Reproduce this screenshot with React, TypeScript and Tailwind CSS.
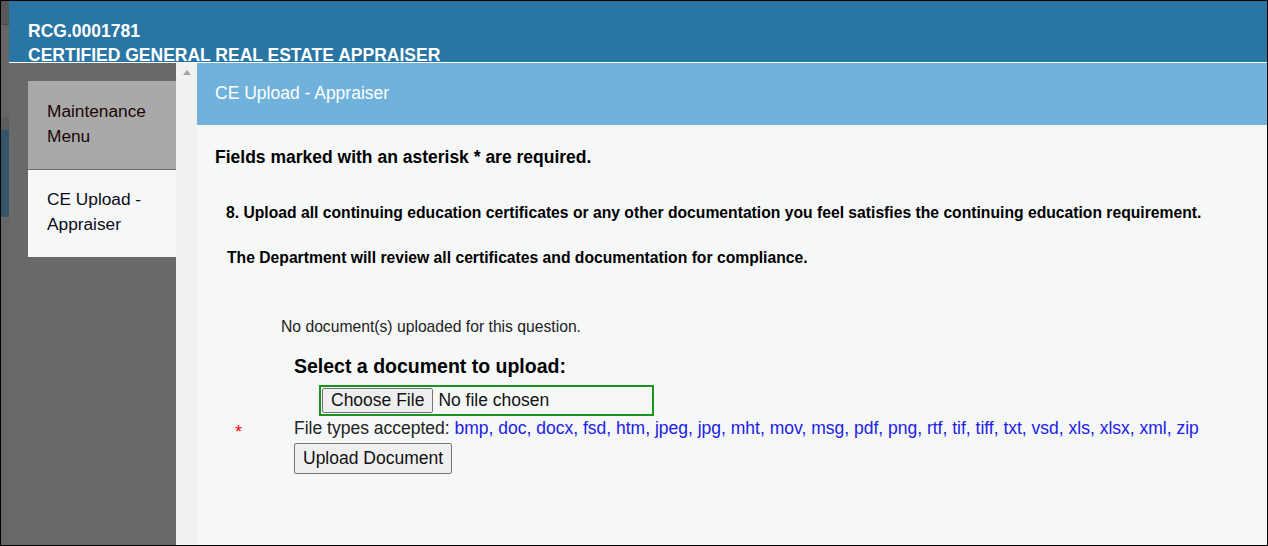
const fileTypes = [
  "bmp", "doc", "docx", "fsd", "htm", "jpeg", "jpg", "mht", "mov", "msg",
  "pdf", "png", "rtf", "tif", "tiff", "txt", "vsd", "xls", "xlsx", "xml", "zip",
];

function SideMenu() {
  return (
    <div className="flex h-full">
      <div className="w-[167px] bg-[#696969] pt-[18px] pl-[19px]">
        <div className="bg-[#a9a9a9] border-b border-[#6f6f6f] h-[89px] pl-[19px] pt-[18px] text-[17.3px] leading-[25px] text-[#1a0505]">
          Maintenance
          <br />
          Menu
        </div>
        <div className="bg-[#f6f8f8] h-[87px] pl-[19px] pt-[17px] text-[17.3px] leading-[25px] text-[#0a0a1a]">
          CE Upload -
          <br />
          Appraiser
        </div>
      </div>
      {/* scrollbar track */}
      <div className="w-[21px] bg-[#f1f1f1] flex justify-center pt-[7px]">
        <div className="w-0 h-0 border-l-[4px] border-r-[4px] border-b-[5px] border-l-transparent border-r-transparent border-b-[#a3a3a3]" />
      </div>
    </div>
  );
}

function UploadForm() {
  return (
    <div className="flex-1 flex flex-col bg-[#f6f8f8]">
      <div className="h-[62px] bg-[#70b2dc] flex items-center pl-[18px] pb-[2px] text-white text-[17.5px]">
        CE Upload - Appraiser
      </div>
      <div className="pl-[18px] pt-[22px] text-black">
        <p className="text-[17.5px] font-bold leading-[20px]">
          Fields marked with an asterisk * are required.
        </p>
        <p className="mt-[37px] ml-[11px] text-[15.7px] font-bold leading-[18px]">
          8. Upload all continuing education certificates or any other documentation you feel satisfies the continuing education requirement.
        </p>
        <p className="mt-[27px] ml-[12px] text-[15.7px] font-bold leading-[18px]">
          The Department will review all certificates and documentation for compliance.
        </p>
        <p className="mt-[51px] ml-[66px] text-[15.7px] leading-[18px] text-[#222]">
          No document(s) uploaded for this question.
        </p>
        <p className="mt-[19px] ml-[79px] text-[19.5px] font-bold leading-[22px]">
          Select a document to upload:
        </p>
        <div className="mt-[8px] ml-[104px] w-[335px] h-[31px] border-2 border-[#1a941a] flex items-center pl-[1px]">
          <span className="h-[25px] px-[8px] bg-[#efefef] border border-[#767676] rounded-[2px] flex items-center text-[17.5px] text-[#111]">
            Choose File
          </span>
          <span className="ml-[5px] text-[17.5px] text-[#111]">No file chosen</span>
        </div>
        <div className="flex items-center h-[25px]">
          <span className="w-[79px] pl-[20px] text-[18px] text-[#f00] leading-none pt-[6px]">*</span>
          <span className="text-[17.5px] text-[#222]">
            File types accepted:{" "}
            <span className="text-[#2020e8]">{fileTypes.join(", ")}</span>
          </span>
        </div>
        <button className="ml-[79px] mt-[2px] h-[31px] px-[8px] bg-[#efefef] border border-[#767676] rounded-[2px] text-[17.5px] text-[#111]">
          Upload Document
        </button>
      </div>
    </div>
  );
}

export default function App() {
  return (
    <div className="w-[1268px] h-[546px] border border-black bg-[#696969] flex overflow-hidden font-['Liberation_Sans',Arial,sans-serif]">
      {/* page behind the overlay */}
      <div className="w-[8px] flex flex-col shrink-0">
        <div className="h-[24px] bg-[#575757] border-b border-[#4a4a4a]" />
        <div className="h-[92px] bg-[#666]" />
        <div className="h-[13px] bg-[#5c5c5c]" />
        <div className="h-[87px] bg-[#34556a]" />
        <div className="flex-1 bg-[#666]" />
      </div>
      <div className="flex-1 flex flex-col">
        <div className="h-[62px] bg-[#2975a4] border-b border-white pl-[19px] pt-[18px] text-white font-bold text-[17.5px] leading-[24px] overflow-hidden shrink-0">
          <div>RCG.0001781</div>
          <div>CERTIFIED GENERAL REAL ESTATE APPRAISER</div>
        </div>
        <div className="flex flex-1">
          <SideMenu />
          <UploadForm />
        </div>
      </div>
    </div>
  );
}
